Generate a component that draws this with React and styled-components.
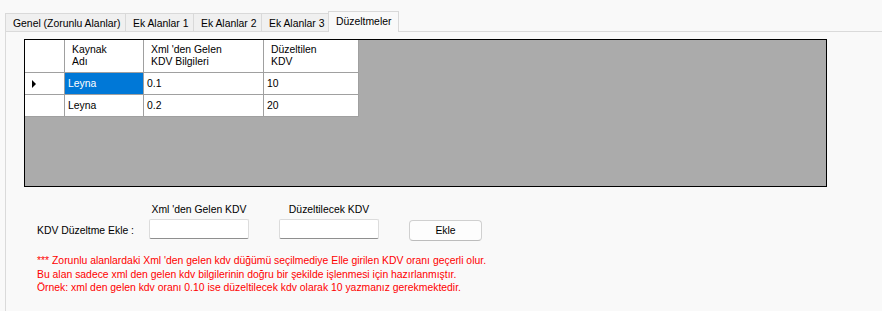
import React from 'react';
import styled, { createGlobalStyle } from 'styled-components';

const GlobalStyle = createGlobalStyle`
  html, body {
    margin: 0;
    padding: 0;
    background: #f9f9f9;
  }
  body {
    font-family: "Liberation Sans", Arial, sans-serif;
    font-size: 10.4px;
    color: #000;
  }
`;

const tabs = [
  { label: 'Genel (Zorunlu Alanlar)', width: 121 },
  { label: 'Ek Alanlar 1', width: 69 },
  { label: 'Ek Alanlar 2', width: 69 },
  { label: 'Ek Alanlar 3', width: 68 },
  { label: 'Düzeltmeler', width: 71, active: true },
];

const rows = [
  { source: 'Leyna', xml: '0.1', fixed: '10', current: true },
  { source: 'Leyna', xml: '0.2', fixed: '20' },
];

const App = () => {
  return (
    <Page>
      <GlobalStyle />
      <TabStrip>
        {tabs.map((t) => (
          <Tab key={t.label} $width={t.width} $active={t.active}>
            {t.label}
          </Tab>
        ))}
      </TabStrip>
      <TabPanel>
        <GridView>
          <Table>
            <HeaderCell />
            <HeaderCell>Kaynak<br />Adı</HeaderCell>
            <HeaderCell>Xml 'den Gelen<br />KDV Bilgileri</HeaderCell>
            <HeaderCell>Düzeltilen<br />KDV</HeaderCell>
            {rows.map((r, i) => (
              <React.Fragment key={i}>
                <RowHeader>{r.current && <Arrow />}</RowHeader>
                <Cell $selected={r.current}>{r.source}</Cell>
                <Cell>{r.xml}</Cell>
                <Cell>{r.fixed}</Cell>
              </React.Fragment>
            ))}
          </Table>
        </GridView>

        <FormRow>
          <FormLabel>KDV Düzeltme Ekle :</FormLabel>
          <Field>
            <Caption>Xml 'den Gelen KDV</Caption>
            <TextBox />
          </Field>
          <Field>
            <Caption>Düzeltilecek KDV</Caption>
            <TextBox />
          </Field>
          <Button>Ekle</Button>
        </FormRow>

        <Notes>
          <div>*** Zorunlu alanlardaki Xml 'den gelen kdv düğümü seçilmediye Elle girilen KDV oranı geçerli olur.</div>
          <div>Bu alan sadece xml den gelen kdv bilgilerinin doğru bir şekilde işlenmesi için hazırlanmıştır.</div>
          <div>Örnek: xml den gelen kdv oranı 0.10 ise düzeltilecek kdv olarak 10 yazmanız gerekmektedir.</div>
        </Notes>
      </TabPanel>
    </Page>
  );
};

// Styles
const Page = styled.div`
  width: 882px;
  height: 311px;
  overflow: hidden;
  background: #f9f9f9;
`;

const TabStrip = styled.div`
  display: flex;
  align-items: flex-end;
  height: 31px;
  box-sizing: border-box;
  padding: 11px 0 0 5px;
`;

const Tab = styled.div`
  position: relative;
  z-index: ${(p) => (p.$active ? 1 : 0)};
  width: ${(p) => p.$width}px;
  height: ${(p) => (p.$active ? 21 : 18)}px;
  margin-bottom: ${(p) => (p.$active ? -1 : 0)}px;
  margin-left: -1px;
  box-sizing: border-box;
  padding: 3px 0 0 7px;
  border: 1px solid #d9d9d9;
  border-bottom: none;
  background: ${(p) => (p.$active ? '#f9f9f9' : '#f0f0f0')};
  white-space: nowrap;
  overflow: hidden;
  line-height: 13px;

  &:first-child {
    margin-left: 0;
  }
`;

const TabPanel = styled.div`
  margin-left: 5px;
  height: 280px;
  box-sizing: border-box;
  border-top: 1px solid #dadada;
  border-left: 1px solid #dadada;
  padding: 7px 0 0 18px;
`;

const GridView = styled.div`
  width: 803px;
  height: 148px;
  box-sizing: border-box;
  border: 1px solid #000;
  background: #ababab;
`;

const Table = styled.div`
  display: inline-grid;
  grid-template-columns: 39px 78px 119px 94px;
  grid-template-rows: 32px 21px 21px;
  gap: 1px;
  padding: 0 1px 1px 0;
  background: #a0a0a0;
`;

const HeaderCell = styled.div`
  background: #fff;
  padding-left: 7px;
  display: flex;
  align-items: center;
  line-height: 12px;
`;

const RowHeader = styled.div`
  background: #fff;
  display: flex;
  align-items: center;
  padding-left: 7px;
`;

const Arrow = styled.span`
  width: 0;
  height: 0;
  border-left: 4px solid #000;
  border-top: 4px solid transparent;
  border-bottom: 4px solid transparent;
`;

const Cell = styled.div`
  background: ${(p) => (p.$selected ? '#0078d7' : '#fff')};
  color: ${(p) => (p.$selected ? '#fff' : '#000')};
  padding-left: 3px;
  display: flex;
  align-items: center;
`;

const FormRow = styled.div`
  display: flex;
  align-items: flex-end;
  margin-top: 16px;
  padding-left: 13px;
`;

const FormLabel = styled.div`
  width: 112px;
  height: 21px;
  line-height: 21px;
  margin-bottom: -2px;
  white-space: nowrap;
`;

const Field = styled.div`
  display: flex;
  flex-direction: column;
  align-items: center;
  width: 100px;
  margin-right: 30px;
`;

const Caption = styled.div`
  line-height: 13px;
  margin-bottom: 3px;
  white-space: nowrap;
`;

const TextBox = styled.div`
  width: 100px;
  height: 20px;
  box-sizing: border-box;
  background: #fff;
  border: 1px solid #dcdcdc;
  border-bottom-color: #8f8f8f;
  border-radius: 2px;
`;

const Button = styled.div`
  width: 73px;
  height: 21px;
  margin-bottom: -2px;
  box-sizing: border-box;
  background: #fdfdfd;
  border: 1px solid #d0d0d0;
  border-bottom-color: #bcbcbc;
  border-radius: 4px;
  display: flex;
  align-items: center;
  justify-content: center;
`;

const Notes = styled.div`
  margin-top: 15px;
  padding-left: 13px;
  color: #ff0000;
  line-height: 13.5px;
  white-space: nowrap;
`;

export default App;
